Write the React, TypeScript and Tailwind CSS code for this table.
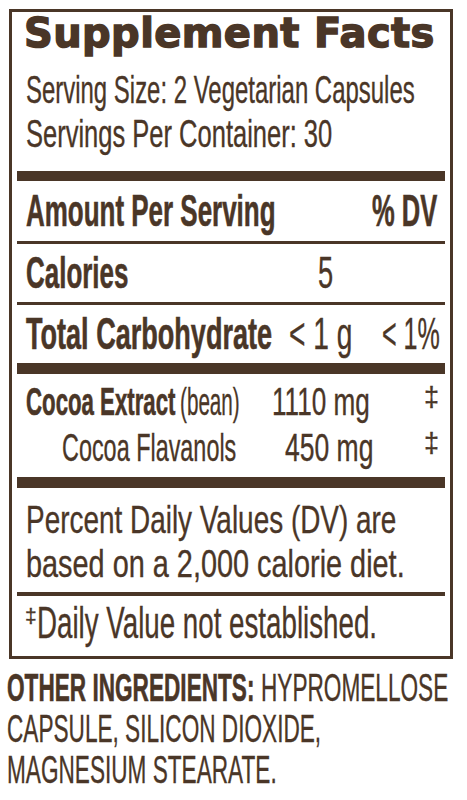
export default function App() {
  return (
    <div className="w-[467px] h-[800px] overflow-hidden bg-white text-[#4a3627] font-['Liberation_Sans',Arial,sans-serif] pt-[9px] [-webkit-text-stroke:0.35px_#4a3627]">
      <div className="ml-[9px] w-[444px] h-[650px] border-[3px] border-[#4a3627] px-[5px] flex flex-col">
        {/* Heading */}
        <div className="h-[159px] pt-[1px] shrink-0">
          <div className="pl-[7px] h-[40px] text-[40px] leading-[40px] font-bold font-['DejaVu_Sans',sans-serif] tracking-[0.4px] whitespace-nowrap [-webkit-text-stroke:1.4px_#4a3627]">
            Supplement Facts
          </div>
          <div className="mt-[15px] pl-[9px] text-[39px] leading-[44px]">
            <div className="origin-left scale-x-[0.614] whitespace-nowrap">Serving Size: 2 Vegetarian Capsules</div>
            <div className="origin-left scale-x-[0.654] whitespace-nowrap">Servings Per Container: 30</div>
          </div>
        </div>
        <div className="h-[10px] bg-[#4a3627] shrink-0" />
        {/* Amount per serving */}
        <div className="h-[60px] shrink-0 flex pl-[9px] text-[44px] leading-[60px] font-bold [-webkit-text-stroke:0.6px_#4a3627]">
          <div className="w-[346px] shrink-0">
            <div className="origin-left scale-x-[0.59] whitespace-nowrap">Amount Per Serving</div>
          </div>
          <div className="shrink-0">
            <div className="origin-left scale-x-[0.58] whitespace-nowrap">% DV</div>
          </div>
        </div>
        <div className="h-[3px] bg-[#4a3627] shrink-0" />
        {/* Calories */}
        <div className="h-[58px] shrink-0 flex pl-[9px] text-[44px] leading-[58px]">
          <div className="w-[292px] shrink-0 font-bold [-webkit-text-stroke:0.6px_#4a3627]">
            <div className="origin-left scale-x-[0.59] whitespace-nowrap">Calories</div>
          </div>
          <div className="shrink-0">
            <div className="origin-left scale-x-[0.62] whitespace-nowrap">5</div>
          </div>
        </div>
        <div className="h-[3px] bg-[#4a3627] shrink-0" />
        {/* Total Carbohydrate */}
        <div className="h-[58px] shrink-0 flex pl-[9px] text-[44px] leading-[58px]">
          <div className="w-[263px] shrink-0 font-bold [-webkit-text-stroke:0.6px_#4a3627]">
            <div className="origin-left scale-x-[0.615] whitespace-nowrap">Total Carbohydrate</div>
          </div>
          <div className="w-[93px] shrink-0">
            <div className="origin-left scale-x-[0.64] whitespace-nowrap">&lt; 1 g</div>
          </div>
          <div className="shrink-0">
            <div className="origin-left scale-x-[0.57] whitespace-nowrap">&lt; 1%</div>
          </div>
        </div>
        <div className="h-[11px] bg-[#4a3627] shrink-0" />
        {/* Cocoa */}
        <div className="h-[103px] shrink-0 pt-[4.5px] text-[39px] leading-[46px]">
          <div className="flex pl-[9px] h-[46px]">
            <div className="w-[154px] shrink-0 font-bold [-webkit-text-stroke:0.6px_#4a3627]">
              <div className="origin-left scale-x-[0.57] whitespace-nowrap">Cocoa Extract</div>
            </div>
            <div className="w-[92px] shrink-0">
              <div className="origin-left scale-x-[0.53] whitespace-nowrap">(bean)</div>
            </div>
            <div className="w-[152px] shrink-0">
              <div className="origin-left scale-x-[0.67] whitespace-nowrap">1110 mg</div>
            </div>
            <div className="shrink-0 text-[27px] leading-[27px] mt-[5px]">‡</div>
          </div>
          <div className="flex pl-[45px] h-[46px]">
            <div className="w-[223px] shrink-0">
              <div className="origin-left scale-x-[0.6] whitespace-nowrap">Cocoa Flavanols</div>
            </div>
            <div className="w-[139px] shrink-0">
              <div className="origin-left scale-x-[0.68] whitespace-nowrap">450 mg</div>
            </div>
            <div className="shrink-0 text-[27px] leading-[27px] mt-[5px]">‡</div>
          </div>
        </div>
        <div className="h-[11px] bg-[#4a3627] shrink-0" />
        {/* Percent note */}
        <div className="h-[104px] shrink-0 pt-[9.5px] pl-[9px] text-[39px] leading-[44px]">
          <div className="origin-left scale-x-[0.716] whitespace-nowrap">Percent Daily Values (DV) are</div>
          <div className="origin-left scale-x-[0.74] whitespace-nowrap">based on a 2,000 calorie diet.</div>
        </div>
        <div className="h-[4px] bg-[#4a3627] shrink-0" />
        {/* Daily value note */}
        <div className="h-[60px] shrink-0 flex pl-[8px]">
          <div className="w-[12px] shrink-0 text-[21px] leading-[21px] mt-[9px]">‡</div>
          <div className="text-[44px] leading-[54px]">
            <div className="origin-left scale-x-[0.63] whitespace-nowrap">Daily Value not established.</div>
          </div>
        </div>
      </div>
      {/* Other ingredients */}
      <div className="mt-[9px] pl-[7px] text-[38px] leading-[41px]">
        <div className="flex">
          <div className="w-[254px] shrink-0 font-bold [-webkit-text-stroke:0.6px_#4a3627]">
            <div className="origin-left scale-x-[0.595] whitespace-nowrap">OTHER INGREDIENTS:</div>
          </div>
          <div className="shrink-0">
            <div className="origin-left scale-x-[0.595] whitespace-nowrap">HYPROMELLOSE</div>
          </div>
        </div>
        <div className="origin-left scale-x-[0.595] whitespace-nowrap">CAPSULE, SILICON DIOXIDE,</div>
        <div className="origin-left scale-x-[0.595] whitespace-nowrap">MAGNESIUM STEARATE.</div>
      </div>
    </div>
  );
}
